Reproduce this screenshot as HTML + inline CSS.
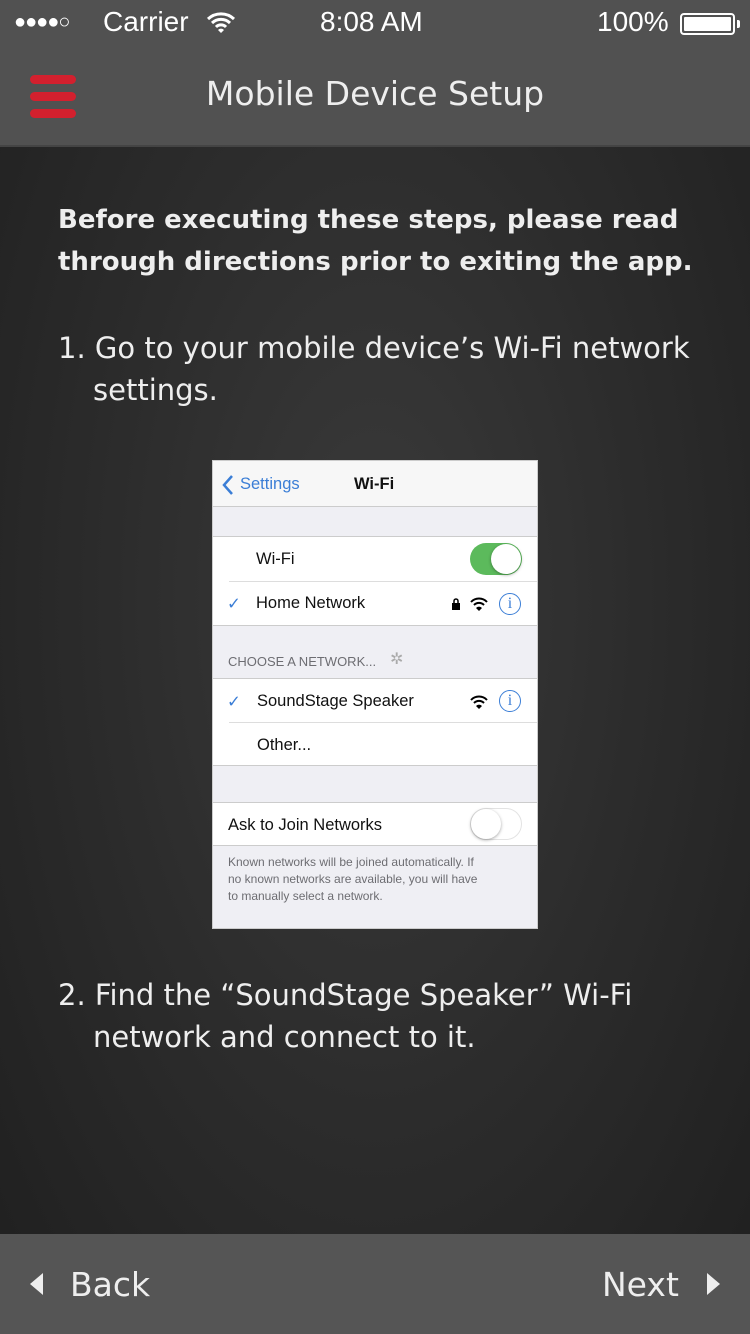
<!DOCTYPE html>
<html><head><meta charset="utf-8"><style>
*{margin:0;padding:0;box-sizing:border-box}
body{width:750px;height:1334px;overflow:hidden;font-family:"Liberation Sans",sans-serif;background:radial-gradient(ellipse at 50% 45%,#3a3a3a 0%,#2c2c2c 50%,#1f1f1f 100%);position:relative;color:#eee}
.top{position:absolute;left:0;top:0;width:750px;height:147px;background:#515151;border-bottom:2px solid #444}
.sb{position:absolute;top:6px;font-size:28px;color:#fff}
.title{position:absolute;top:74px;left:0;width:750px;text-align:center;font-family:"DejaVu Sans",sans-serif;font-size:33px;color:#eee}
.hb{position:absolute;left:30px;width:46px;height:9px;border-radius:5px;background:#d3202e}
.p{position:absolute;left:58px;font-family:"DejaVu Sans",sans-serif;font-size:29px;line-height:42px;color:#eee;width:680px}
.shot{position:absolute;left:212px;top:460px;width:326px;height:469px;background:#efeff4;border:1px solid #ccc;font-size:16.5px;color:#111}
.row{position:absolute;left:0;width:324px;background:#fff}
.bot{position:absolute;left:0;top:1234px;width:750px;height:100px;background:#555}
.sw{position:absolute;width:52px;height:32px;border-radius:16px}
.knob{position:absolute;top:1px;width:30px;height:30px;border-radius:50%;background:#fff;box-shadow:0 1px 3px rgba(0,0,0,.35)}
.info{position:absolute;width:22px;height:22px;border:1.5px solid #3b7ed6;border-radius:50%;color:#3b7ed6;font-family:"Liberation Serif",serif;font-size:16px;text-align:center;line-height:19px}
</style></head><body>
<div class="top">
<div class="sb" style="left:14px;font-size:20px;top:11px;letter-spacing:-1px">●●●●○</div>
<div class="sb" style="left:103px">Carrier</div>
<svg style="position:absolute;left:206px;top:12px" width="30" height="22" viewBox="0 0 30 22"><path d="M2 7a19 19 0 0 1 26 0M6 11a13 13 0 0 1 18 0M10 15a7 7 0 0 1 10 0" stroke="#fff" stroke-width="3" fill="none"/><path d="M12 18l3 3 3-3a4 4 0 0 0-6 0z" fill="#fff"/></svg>
<div class="sb" style="left:320px">8:08 AM</div>
<div class="sb" style="left:597px">100%</div>
<div style="position:absolute;left:680px;top:13px;width:55px;height:22px;border:2px solid #fff;border-radius:4px;padding:2px"><div style="background:#fff;width:100%;height:100%;border-radius:1px"></div></div>
<div style="position:absolute;left:737px;top:20px;width:3px;height:8px;background:#fff;border-radius:0 2px 2px 0"></div>
<div class="hb" style="top:75px"></div><div class="hb" style="top:92px"></div><div class="hb" style="top:109px"></div>
<div class="title">Mobile Device Setup</div>
</div>
<div class="p" style="top:199px;font-weight:bold;font-size:26px;white-space:nowrap;width:700px">Before executing these steps, please read<br>through directions prior to exiting the app.</div>
<div class="p" style="top:327px;padding-left:35px;text-indent:-35px">1. Go to your mobile device’s Wi-Fi network settings.</div>
<div class="shot">
<div class="row" style="top:0;height:46px;background:#f7f7f7;border-bottom:1px solid #ccc">
<svg style="position:absolute;left:9px;top:14px" width="12" height="20"><path d="M10 1L2 10l8 9" stroke="#3b7ed6" stroke-width="2.5" fill="none"/></svg>
<span style="position:absolute;left:27px;top:14px;color:#3b7ed6">Settings</span>
<span style="position:absolute;left:141px;top:14px;font-weight:bold">Wi-Fi</span></div>
<div class="row" style="top:75px;height:90px;border-top:1px solid #ccc;border-bottom:1px solid #ccc">
<span style="position:absolute;left:43px;top:13px">Wi-Fi</span>
<div class="sw" style="left:257px;top:6px;background:#5cba5c"><div class="knob" style="left:21px"></div></div>
<div style="position:absolute;left:16px;right:0;top:44px;border-top:1px solid #ddd"></div>
<span style="position:absolute;left:14px;top:57px;color:#3b7ed6">✓</span>
<span style="position:absolute;left:43px;top:57px">Home Network</span>
<svg style="position:absolute;left:238px;top:61px" width="10" height="12"><rect x="1" y="5" width="8" height="7" fill="#000"/><path d="M3 5V3a2 2 0 0 1 4 0v2" stroke="#000" stroke-width="1.5" fill="none"/></svg>
<svg style="position:absolute;left:257px;top:60px" width="18" height="14"><path d="M1 5a11 11 0 0 1 16 0M4 8a7 7 0 0 1 10 0" stroke="#000" stroke-width="2" fill="none"/><path d="M6 11l3 3 3-3a4 4 0 0 0-6 0z" fill="#000"/></svg>
<div class="info" style="left:286px;top:56px">i</div></div>
<span style="position:absolute;left:15px;top:193px;font-size:13px;color:#6d6d72">CHOOSE A NETWORK...</span>
<span style="position:absolute;left:177px;top:188px;color:#aaa;font-size:16px">✲</span>
<div class="row" style="top:217px;height:88px;border-top:1px solid #ccc;border-bottom:1px solid #ccc">
<span style="position:absolute;left:14px;top:13px;color:#3b7ed6">✓</span>
<span style="position:absolute;left:44px;top:13px">SoundStage Speaker</span>
<svg style="position:absolute;left:257px;top:16px" width="18" height="14"><path d="M1 5a11 11 0 0 1 16 0M4 8a7 7 0 0 1 10 0" stroke="#000" stroke-width="2" fill="none"/><path d="M6 11l3 3 3-3a4 4 0 0 0-6 0z" fill="#000"/></svg>
<div class="info" style="left:286px;top:11px">i</div>
<div style="position:absolute;left:16px;right:0;top:43px;border-top:1px solid #ddd"></div>
<span style="position:absolute;left:44px;top:57px">Other...</span></div>
<div class="row" style="top:341px;height:44px;border-top:1px solid #ccc;border-bottom:1px solid #ccc">
<span style="position:absolute;left:15px;top:13px">Ask to Join Networks</span>
<div class="sw" style="left:257px;top:5px;background:#fff;border:1.5px solid #e3e3e3"><div class="knob" style="left:0;top:0"></div></div></div>
<div style="position:absolute;left:15px;top:393px;width:300px;font-size:12px;line-height:17px;color:#6d6d72">Known networks will be joined automatically. If<br>no known networks are available, you will have<br>to manually select a network.</div>
</div>
<div class="p" style="top:974px;padding-left:35px;text-indent:-35px">2. Find the “SoundStage Speaker” Wi-Fi network and connect to it.</div>
<div class="bot">
<svg style="position:absolute;left:30px;top:39px" width="14" height="22"><path d="M13 0L0 11l13 11z" fill="#eee"/></svg>
<span style="position:absolute;left:70px;top:31px;font-family:'DejaVu Sans',sans-serif;font-size:33px;color:#eee">Back</span>
<span style="position:absolute;left:602px;top:31px;font-family:'DejaVu Sans',sans-serif;font-size:33px;color:#eee">Next</span>
<svg style="position:absolute;left:706px;top:39px" width="14" height="22"><path d="M1 0l13 11L1 22z" fill="#eee"/></svg>
</div>
</body></html>
